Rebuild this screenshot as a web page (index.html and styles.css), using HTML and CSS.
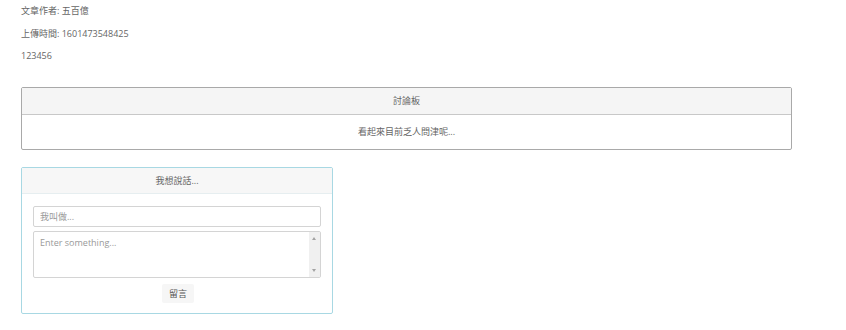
FILE: index.html
```html
<!DOCTYPE html>
<html lang="zh-Hant">
<head>
<meta charset="utf-8">
<link rel="stylesheet" href="styles.css">
</head>
<body>
<div class="page">
  <div class="meta">
    <p class="line">文章作者: 五百億</p>
    <p class="line">上傳時間: 1601473548425</p>
    <p class="line">123456</p>
  </div>
  <div class="panel board">
    <div class="panel-heading">討論板</div>
    <div class="panel-body">看起來目前乏人問津呢...</div>
  </div>
  <div class="panel talk">
    <div class="panel-heading talk-heading">我想說話...</div>
    <div class="panel-body talk-body">
      <input class="field name" type="text" placeholder="我叫做...">
      <div class="area-wrap">
        <textarea class="field area" placeholder="Enter something..."></textarea>
        <div class="scrollbar">
          <span class="arrow up"></span>
          <span class="arrow down"></span>
        </div>
      </div>
      <div class="actions"><button class="btn">留言</button></div>
    </div>
  </div>
</div>
</body>
</html>
```
FILE: styles.css
```css
html, body {
  margin: 0;
  padding: 0;
  background: #fff;
}
body {
  font-family: "Open Sans", "Noto Sans CJK TC", sans-serif;
  font-size: 9px;
  color: #666;
}
.page {
  padding: 0 21px;
}
.meta {
  margin-bottom: 19.5px;
}
.line {
  margin: 0;
  height: 22.5px;
  line-height: 22px;
}
.panel {
  border: 1px solid #a9a9a9;
  border-radius: 2px;
  background: #fff;
}
.board {
  width: 769px;
}
.panel-heading {
  background: #f5f5f5;
  height: 26px;
  line-height: 26px;
  text-align: center;
  border-bottom: 1px solid #c8c8c8;
}
.board .panel-body {
  height: 34px;
  line-height: 34px;
  text-align: center;
}
.talk {
  margin-top: 17px;
  width: 310px;
  height: 145px;
  border-color: #a8d8e3;
}
.talk-heading {
  background: #f7f7f7;
  height: 25px;
  line-height: 25px;
  border-bottom: 1px solid #e6eef0;
}
.talk-body {
  padding: 12px 11px 0 11px;
  display: flex;
  flex-direction: column;
}
.field {
  font-family: "Open Sans", "Noto Sans CJK TC", sans-serif;
  font-size: 9px;
  color: #666;
  border: 1px solid #d4d4d4;
  border-radius: 2px;
  box-sizing: border-box;
  width: 288px;
  outline: none;
  background: #fff;
}
.field::placeholder {
  color: #999;
}
.name {
  height: 21px;
  padding: 0 6px;
}
.area-wrap {
  position: relative;
  margin-top: 4px;
  width: 288px;
  height: 47px;
}
.area {
  display: block;
  height: 47px;
  padding: 4px 6px;
  resize: none;
  overflow: hidden;
}
.scrollbar {
  position: absolute;
  right: 1px;
  top: 1px;
  bottom: 1px;
  width: 11px;
  background: #f0f0f0;
}
.arrow {
  position: absolute;
  left: 3px;
  width: 0;
  height: 0;
  border-left: 2.5px solid transparent;
  border-right: 2.5px solid transparent;
}
.arrow.up {
  top: 5px;
  border-bottom: 3px solid #a3a3a3;
}
.arrow.down {
  bottom: 5px;
  border-top: 3px solid #a3a3a3;
}
.actions {
  display: flex;
  justify-content: center;
  margin-top: 6px;
}
.btn {
  font-family: "Open Sans", "Noto Sans CJK TC", sans-serif;
  font-size: 9px;
  color: #555;
  background: #f6f6f6;
  border: none;
  border-radius: 2px;
  width: 32px;
  height: 19px;
  padding: 0;
  margin-left: 2px;
}
```
